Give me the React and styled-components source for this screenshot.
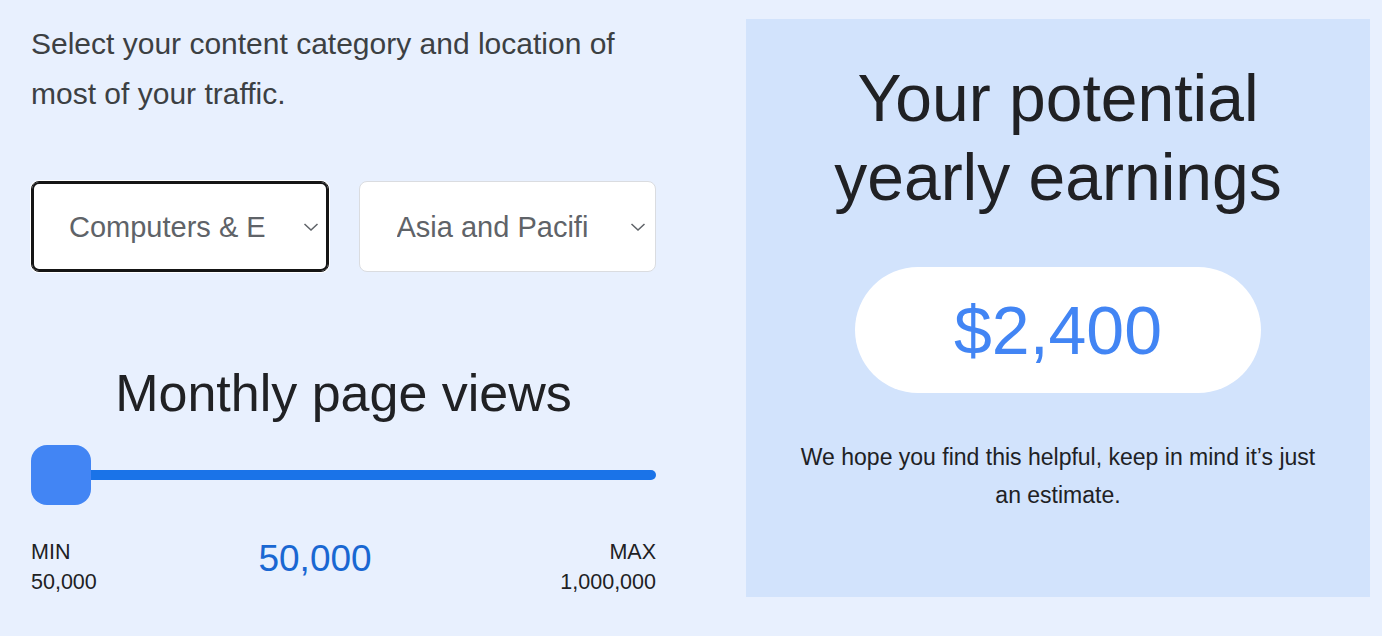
import React, { useState } from 'react';
import styled, { createGlobalStyle } from 'styled-components';

const GlobalStyle = createGlobalStyle`
  html, body {
    margin: 0;
    background: #e8f0fe;
  }
  body {
    font-family: Arial, "Liberation Sans", Helvetica, sans-serif;
  }
`;

const CATEGORIES = ['Computers & Electronics', 'Arts & Entertainment', 'Finance', 'Health'];
const REGIONS = ['Asia and Pacific', 'North America', 'Europe', 'Latin America'];

const formatNumber = (n) => Number(n).toLocaleString('en-US');

const Chevron = () => (
  <ChevronIcon width="16" height="8" viewBox="0 0 16 8" aria-hidden="true">
    <path d="M1.5 1 L8 7 L14.5 1" fill="none" stroke="#5f6368" strokeWidth="1.5" />
  </ChevronIcon>
);

const Dropdown = ({ options, focused, endPad = 61 }) => (
  <SelectWrap>
    <Select defaultValue={options[0]} $focused={focused} $endPad={endPad}>
      {options.map((o) => (
        <option key={o} value={o}>{o}</option>
      ))}
    </Select>
    <Chevron />
  </SelectWrap>
);

const App = () => {
  const [views, setViews] = useState(50000);
  const yearly = Math.round((views / 50000) * 2400);

  return (
    <>
      <GlobalStyle />
      <Page>
        <Controls>
          <Intro>Select your content category and location of most of your traffic.</Intro>
          <SelectRow>
            <Dropdown options={CATEGORIES} focused />
            <Dropdown options={REGIONS} endPad={66} />
          </SelectRow>
          <SectionTitle>Monthly page views</SectionTitle>
          <Range
            type="range"
            min={50000}
            max={1000000}
            step={10000}
            value={views}
            onChange={(e) => setViews(Number(e.target.value))}
          />
          <RangeLabels>
            <Limit>
              MIN
              <br />
              50,000
            </Limit>
            <CurrentValue>{formatNumber(views)}</CurrentValue>
            <Limit $align="right">
              MAX
              <br />
              1,000,000
            </Limit>
          </RangeLabels>
        </Controls>

        <ResultPanel>
          <ResultTitle>Your potential yearly earnings</ResultTitle>
          <Earnings>${formatNumber(yearly)}</Earnings>
          <Note>We hope you find this helpful, keep in mind it’s just an estimate.</Note>
        </ResultPanel>
      </Page>
    </>
  );
};

const Page = styled.div`
  display: grid;
  grid-template-columns: 625px 624px;
  column-gap: 90px;
  padding: 19px 12px 0 31px;
`;

const Controls = styled.div`
  display: flex;
  flex-direction: column;
`;

const Intro = styled.p`
  margin: 0;
  font-size: 30px;
  line-height: 50px;
  color: #3c4043;
`;

const SelectRow = styled.div`
  display: grid;
  grid-template-columns: 1fr 1fr;
  column-gap: 30px;
  margin-top: 62px;
`;

const SelectWrap = styled.div`
  position: relative;
`;

const Select = styled.select`
  appearance: none;
  -webkit-appearance: none;
  width: 100%;
  height: 91px;
  margin: 0;
  padding: 0 ${(p) => p.$endPad}px 0 37px;
  box-sizing: border-box;
  background: #fff;
  border: 1px solid ${(p) => (p.$focused ? '#151515' : '#dadce0')};
  border-radius: 8px;
  box-shadow: ${(p) => (p.$focused ? 'inset 0 0 0 2px #151515, 0 0 0 1px #fff' : 'none')};
  font-family: inherit;
  font-size: 29px;
  color: #5f6368;
  outline: none;
`;

const ChevronIcon = styled.svg`
  position: absolute;
  right: 10px;
  top: 42px;
  pointer-events: none;
`;

const SectionTitle = styled.h2`
  margin: 90px 0 0;
  font-size: 52px;
  font-weight: 400;
  line-height: 1.2;
  color: #202124;
  text-align: center;
`;

const Range = styled.input`
  -webkit-appearance: none;
  appearance: none;
  display: block;
  width: 100%;
  height: 60px;
  margin: 21px 0 0;
  background: transparent;

  &::-webkit-slider-runnable-track {
    height: 10px;
    border-radius: 5px;
    background: #1a73e8;
  }

  &::-webkit-slider-thumb {
    -webkit-appearance: none;
    width: 60px;
    height: 60px;
    margin-top: -25px;
    border: none;
    border-radius: 16px;
    background: #4285f4;
  }
`;

const RangeLabels = styled.div`
  display: flex;
  justify-content: space-between;
  align-items: flex-start;
  margin-top: 32px;
`;

const Limit = styled.div`
  font-size: 21.5px;
  line-height: 30px;
  color: #202124;
  text-align: ${(p) => p.$align || 'left'};
`;

const CurrentValue = styled.div`
  margin: 1px 27px 0 0;
  font-size: 37px;
  color: #1967d2;
`;

const ResultPanel = styled.section`
  display: flex;
  flex-direction: column;
  align-items: center;
  padding: 40px 48px;
  background: #d2e3fc;
  text-align: center;
`;

const ResultTitle = styled.h1`
  margin: 0;
  font-size: 66px;
  font-weight: 400;
  line-height: 1.2;
  color: #202124;
`;

const Earnings = styled.div`
  display: flex;
  align-items: center;
  justify-content: center;
  width: 406px;
  height: 126px;
  margin-top: 50px;
  border-radius: 63px;
  background: #fff;
  font-size: 68px;
  color: #4285f4;
`;

const Note = styled.p`
  margin: 45px 0 0;
  font-size: 23px;
  line-height: 38px;
  color: #202124;
`;

export default App;
